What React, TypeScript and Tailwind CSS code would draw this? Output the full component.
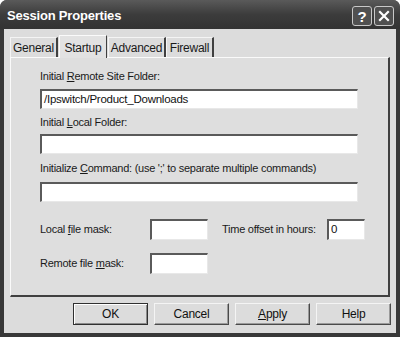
const tabs = [
  { name: "General", w: "w-[48px]" },
  { name: "Startup", w: "w-[48px]", active: true },
  { name: "Advanced", w: "w-[58px]" },
  { name: "Firewall", w: "w-[48px]" },
];

function Field({ className = "", value = "" }: { className?: string; value?: string }) {
  return (
    <div
      className={`h-[20px] bg-white border-t-2 border-l-2 border-b border-r border-t-[#5a5a5a] border-l-[#5a5a5a] border-b-[#e8e8e8] border-r-[#e8e8e8] pl-[2px] leading-[17px] text-[11.5px] text-[#111] ${className}`}
    >
      {value}
    </div>
  );
}

function Btn({ children, primary = false }: { children: React.ReactNode; primary?: boolean }) {
  return (
    <div
      className={`w-[75px] h-[22px] flex items-center justify-center text-[12px] text-[#111] bg-[#dcdcdc] ${
        primary
          ? "border border-[#303030] shadow-[inset_1px_1px_0_#fff,inset_-1px_-1px_0_#8a8a8a]"
          : "border border-t-[#f4f4f4] border-l-[#f4f4f4] border-b-[#4a4a4a] border-r-[#4a4a4a] shadow-[inset_-1px_-1px_0_#9a9a9a]"
      }`}
    >
      {children}
    </div>
  );
}

export default function App() {
  return (
    <div className="w-[400px] h-[337px] bg-white">
      <div className="w-[400px] h-[337px] bg-[#383838] rounded-t-[7px] flex flex-col font-['Liberation_Sans',Arial,sans-serif] overflow-hidden">
        {/* title bar */}
        <div className="h-[29px] flex items-center justify-between pl-[7px] pr-[6px] bg-gradient-to-b from-[#5a5a5a] via-[#3c3c3c] to-[#333]">
          <span className="text-white font-bold text-[13px] tracking-[-0.2px] mt-[2px]">Session Properties</span>
          <div className="flex gap-[2px] mt-[3px]">
            <div className="w-[20px] h-[20px] rounded-[3px] border border-[#c8c8c8] bg-[#505050] flex items-center justify-center text-white font-bold text-[15px] leading-none">
              ?
            </div>
            <div className="w-[20px] h-[20px] rounded-[3px] border border-[#c8c8c8] bg-[#505050] flex items-center justify-center">
              <svg width="12" height="12" viewBox="0 0 12 12">
                <path d="M2 2L10 10M10 2L2 10" stroke="#fff" strokeWidth="2.2" strokeLinecap="square" />
              </svg>
            </div>
          </div>
        </div>

        {/* body */}
        <div className="flex-1 mx-[4px] mb-[4px] bg-[#dcdcdc] text-[11px] tracking-[-0.25px] text-[#1a1a1a] flex flex-col">
          {/* tabs */}
          <div className="h-[28px] flex items-end pl-[6px]">
            {tabs.map((t) =>
              t.active ? (
                <div
                  key={t.name}
                  className={`${t.w} h-[23px] mx-[1px] bg-[#e2e2e2] border-t border-l border-r border-t-[#fafafa] border-l-[#fafafa] border-r-[#404040] -mb-[1px] relative z-10 flex items-start justify-center pt-[3px] text-[12px]`}
                >
                  {t.name}
                </div>
              ) : (
                <div
                  key={t.name}
                  className={`${t.w} h-[20px] bg-[#dcdcdc] border-t border-l border-r border-t-[#f4f4f4] border-l-[#f4f4f4] border-r-[#404040] border-r-2 flex items-center justify-center text-[12px]`}
                >
                  {t.name}
                </div>
              )
            )}
          </div>

          {/* panel */}
          <div className="ml-[6px] w-[380px] h-[240px] border border-t-[#fafafa] border-l-[#fafafa] border-b-[#404040] border-r-[#404040] border-r-2 border-b-2 bg-[#dedede] pl-[29px] pt-[12px]">
            <div className="h-[13px] leading-[13px] whitespace-nowrap">
              Initial <u>R</u>emote Site Folder:
            </div>
            <Field className="mt-[6px] w-[318px]" value="/Ipswitch/Product_Downloads" />
            <div className="h-[13px] leading-[13px] mt-[7px] whitespace-nowrap">
              Initial <u>L</u>ocal Folder:
            </div>
            <Field className="mt-[5px] w-[318px]" />
            <div className="h-[13px] leading-[13px] mt-[8px] whitespace-nowrap">
              Initialize <u>C</u>ommand: (use &apos;;&apos; to separate multiple commands)
            </div>
            <Field className="mt-[7px] w-[318px]" />

            <div className="flex items-center mt-[17px] h-[21px]">
              <span className="w-[110px] whitespace-nowrap">
                Local <u>f</u>ile mask:
              </span>
              <Field className="w-[58px] h-[21px]" />
              <span className="ml-[14px] w-[105px] whitespace-nowrap">Time offset in hours:</span>
              <Field className="w-[38px] h-[21px]" value="0" />
            </div>
            <div className="flex items-center mt-[13px] h-[21px]">
              <span className="w-[110px] whitespace-nowrap">
                Remote file <u>m</u>ask:
              </span>
              <Field className="w-[58px] h-[21px]" />
            </div>
          </div>

          {/* buttons */}
          <div className="flex justify-end gap-[6px] pr-[5px] mt-[6px]">
            <Btn primary>OK</Btn>
            <Btn>Cancel</Btn>
            <Btn>
              <span>
                <u>A</u>pply
              </span>
            </Btn>
            <Btn>Help</Btn>
          </div>
        </div>
      </div>
    </div>
  );
}
